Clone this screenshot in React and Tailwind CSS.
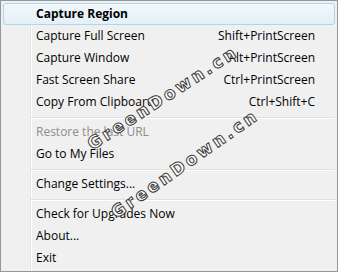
import { Fragment } from "react";

const items = [
  { label: "Capture Region", bold: true, active: true },
  { label: "Capture Full Screen", key: "Shift+PrintScreen" },
  { label: "Capture Window", key: "Alt+PrintScreen" },
  { label: "Fast Screen Share", key: "Ctrl+PrintScreen" },
  { label: "Copy From Clipboard", key: "Ctrl+Shift+C" },
  "sep",
  { label: "Restore the last URL", disabled: true },
  { label: "Go to My Files" },
  "sep",
  { label: "Change Settings..." },
  "sep",
  { label: "Check for Upgrades Now" },
  { label: "About..." },
  { label: "Exit" },
];

function Row({ item }) {
  return (
    <div
      className={
        "flex h-[22px] items-center justify-between pl-[32px] pr-[19px] rounded-[3px] border " +
        (item.active
          ? "border-[#a8d8eb] bg-[linear-gradient(to_bottom,#f2f8fc,#e3eff9)]"
          : "border-transparent") +
        (item.disabled ? " text-[#8d8d8d]" : " text-black")
      }
    >
      <span className={item.bold ? "font-bold" : ""}>{item.label}</span>
      {item.key && <span>{item.key}</span>}
    </div>
  );
}

function Watermark({ className }) {
  return (
    <div
      className={
        "absolute -translate-x-1/2 -translate-y-1/2 whitespace-nowrap text-[17px] font-bold tracking-[3px] text-white [-webkit-text-stroke:1px_#3a3a3a] font-['DejaVu_Sans',sans-serif] " +
        className
      }
    >
      GreenDown.cn
    </div>
  );
}

export default function App() {
  return (
    <div className="relative w-[338px] h-[272px] overflow-hidden border border-[#979797] p-[2px] bg-[#f0f0f0] bg-[linear-gradient(to_right,transparent_29px,#e2e3e3_29px,#e2e3e3_30px,#ffffff_30px,#ffffff_31px,transparent_31px)] text-[12px] leading-none font-['Open_Sans',sans-serif]">
      {items.map((it, i) =>
        it === "sep" ? (
          <div key={i} className="h-[8px] pt-[4px] ml-[28px]">
            <div className="h-px bg-[#e0e0e0]" />
            <div className="h-px bg-white" />
          </div>
        ) : (
          <Fragment key={i}>
            <Row item={it} />
          </Fragment>
        )
      )}
      <Watermark className="left-[162px] top-[97px] rotate-[-33deg]" />
      <Watermark className="left-[184px] top-[163px] rotate-[-35deg]" />
    </div>
  );
}
